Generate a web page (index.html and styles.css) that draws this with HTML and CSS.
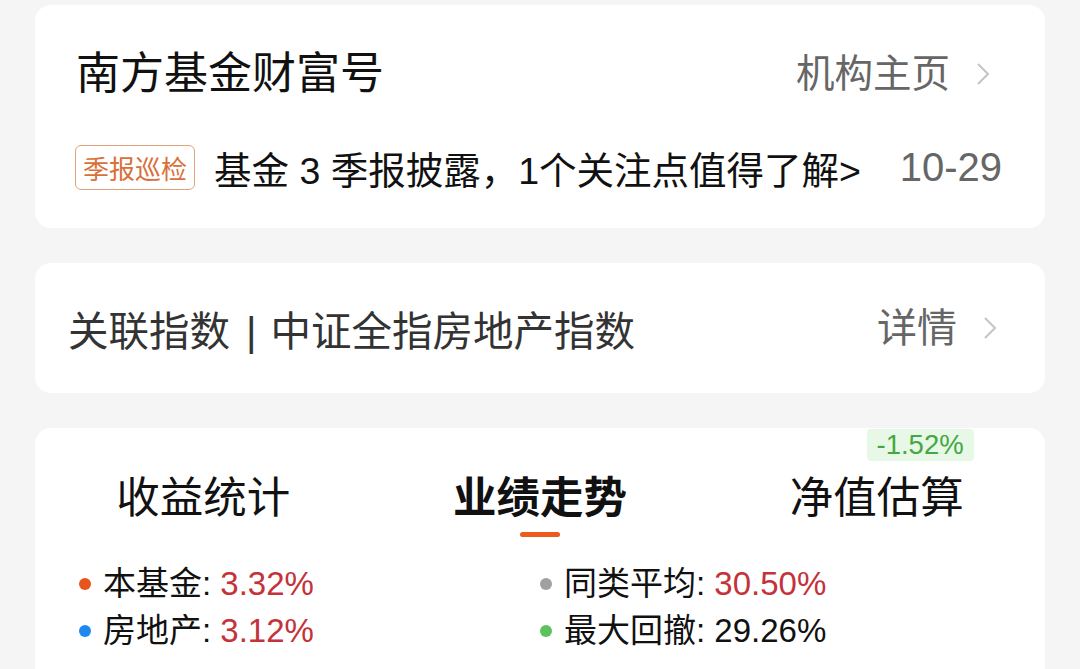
FILE: index.html
```html
<!DOCTYPE html>
<html lang="zh-CN">
<head>
<meta charset="utf-8">
<link rel="stylesheet" href="styles.css">
</head>
<body>
<div class="page">
  <section class="card card-org">
    <div class="org-head">
      <h1 class="org-title">南方基金财富号</h1>
      <a class="more">机构主页<svg class="chev" viewBox="0 0 14 24"><path d="M2 2 L12 12 L2 22" /></svg></a>
    </div>
    <div class="news">
      <span class="tag">季报巡检</span>
      <span class="news-text">基金 3 季报披露，1个关注点值得了解&gt;</span>
      <span class="news-date">10-29</span>
    </div>
  </section>

  <section class="card card-index">
    <span class="index-text">关联指数<span class="sep">|</span>中证全指房地产指数</span>
    <a class="more more-lg">详情<svg class="chev" viewBox="0 0 14 24"><path d="M2 2 L12 12 L2 22" /></svg></a>
  </section>

  <section class="card card-perf">
    <div class="tabs">
      <div class="tab"><span class="tab-label">收益统计</span></div>
      <div class="tab active"><span class="tab-label">业绩走势</span><span class="tab-bar"></span></div>
      <div class="tab"><span class="tab-label">净值估算<span class="badge">-1.52%</span></span></div>
    </div>
    <div class="legend">
      <div class="legend-item"><span class="dot dot-orange"></span>本基金: <span class="up">3.32%</span></div>
      <div class="legend-item"><span class="dot dot-gray"></span>同类平均: <span class="up">30.50%</span></div>
      <div class="legend-item"><span class="dot dot-blue"></span>房地产: <span class="up">3.12%</span></div>
      <div class="legend-item"><span class="dot dot-green"></span>最大回撤: 29.26%</div>
    </div>
  </section>
</div>
</body>
</html>
```

FILE: styles.css
```css
* { box-sizing: border-box; margin: 0; padding: 0; }
html, body {
  background: #f5f5f5;
  width: 1080px;
  height: 669px;
  overflow: hidden;
}
body {
  font-family: "Liberation Sans", "Noto Sans CJK SC", sans-serif;
  color: #111;
}
.page {
  padding: 5px 35px 0;
  display: flex;
  flex-direction: column;
  gap: 35px;
}
.card {
  background: #fff;
  border-radius: 16px;
}
.more {
  display: flex;
  align-items: center;
  color: #666;
  font-size: 38.5px;
  line-height: 50px;
  text-decoration: none;
}
.more-lg { font-size: 40px; }
.chev {
  width: 14px;
  height: 24px;
  margin-left: 26px;
  fill: none;
  stroke: #c4c4c4;
  stroke-width: 2;
}

/* card 1 */
.card-org {
  height: 223px;
  padding: 44px 43px 0 43px;
}
.org-head {
  display: flex;
  justify-content: space-between;
  align-items: center;
  padding-right: 12px;
}
.org-title {
  font-size: 44px;
  font-weight: 400;
  line-height: 50px;
  color: #111;
  margin-left: -2px;
}
.news {
  margin-top: 45px;
  margin-left: -3px;
  display: flex;
  align-items: center;
  height: 46px;
}
.tag {
  display: inline-flex;
  align-items: center;
  height: 45px;
  padding: 0 7px;
  border: 1.5px solid #e2a27c;
  border-radius: 6px;
  color: #d8703a;
  font-size: 26px;
  white-space: nowrap;
}
.news-text {
  margin-left: 19px;
  font-size: 37.5px;
  white-space: nowrap;
  color: #111;
  flex: 1;
}
.news-date {
  font-size: 40px;
  color: #666;
}

/* card 2 */
.card-index {
  height: 130px;
  padding: 0 48px 0 33px;
  display: flex;
  align-items: center;
  justify-content: space-between;
}
.index-text {
  font-size: 40.5px;
  color: #333;
  white-space: nowrap;
}
.sep {
  margin: 0 14px 0 16px;
}

/* card 3 */
.card-perf {
  height: 260px;
  padding: 44px 44px 0;
}
.tabs {
  display: grid;
  grid-template-columns: 1fr 1fr 1fr;
  margin: 0 -44px;
}
.tab {
  display: flex;
  flex-direction: column;
  align-items: center;
}
.tab-label {
  position: relative;
  font-size: 43.5px;
  line-height: 52px;
  color: #111;
}
.tab.active .tab-label { font-weight: 700; }
.tab-bar {
  margin-top: 8px;
  width: 40px;
  height: 5px;
  border-radius: 3px;
  background: #ee5a1e;
}
.badge {
  position: absolute;
  top: -43px;
  right: -10px;
  height: 32px;
  padding: 0 10px;
  background: #e8f8e6;
  color: #43a843;
  font-size: 27.5px;
  line-height: 32px;
  font-weight: 400;
  border-radius: 4px;
  white-space: nowrap;
}
.legend {
  margin-top: 23px;
  display: grid;
  grid-template-columns: 1fr 1fr;
}
.legend-item {
  display: flex;
  align-items: center;
  font-size: 33px;
  line-height: 47px;
  white-space: pre;
  color: #111;
}
.dot {
  width: 12px;
  height: 12px;
  border-radius: 50%;
  margin-right: 12px;
}
.dot-orange { background: #e8541e; }
.dot-gray { background: #a0a0a0; }
.dot-blue { background: #1e88f0; }
.dot-green { background: #5cc35c; }
.up { color: #c4323a; }
```
